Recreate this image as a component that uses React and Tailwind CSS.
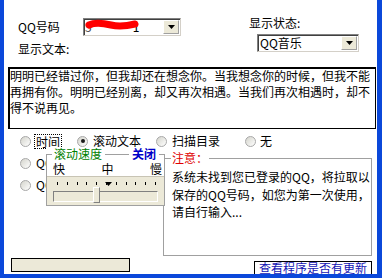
import React from "react";

function DropButton() {
  return (
    <div className="ml-auto mr-px flex h-[14px] w-[16px] shrink-0 items-center justify-center border border-t-white border-l-white border-r-[#a0a0a0] border-b-[#a0a0a0] bg-[#ece9d8]">
      <svg width="7" height="4" viewBox="0 0 7 4">
        <path d="M0 0h7L3.5 4z" fill="#000" />
      </svg>
    </div>
  );
}

function Combo({ className, children }) {
  return (
    <div
      className={`flex h-[18px] items-center border border-t-[#808080] border-l-[#808080] border-r-[#d4d0c8] border-b-[#d4d0c8] bg-white shadow-[inset_1px_1px_0_#404040] ${className}`}
    >
      {children}
      <DropButton />
    </div>
  );
}

function Radio({ checked }) {
  return (
    <span className="flex h-[11px] w-[11px] shrink-0 items-center justify-center rounded-full border border-[#a8a8a8] bg-linear-to-br from-[#d4d4cc] to-white">
      {checked && <span className="h-[4px] w-[4px] rounded-full bg-[#1a1a1a]" />}
    </span>
  );
}

export default function App() {
  return (
    <div className="h-[278px] w-[382px] bg-[#0b48da] pb-[4px] pl-[4px] pr-[5px] font-['Noto_Sans_CJK_SC',sans-serif] text-[12px] leading-[14px] text-black">
      <div className="relative flex h-full flex-col bg-white">
        {/* top fields */}
        <div className="flex h-[67px] shrink-0">
          <div className="pl-[14px] pt-[18px]">
            <div className="flex items-center">
              <span className="w-[65px]">QQ号码</span>
              <Combo className="w-[98px]">
                <div className="relative flex flex-1 items-center self-stretch pl-px">
                  <span className="text-[#505050]">5</span>
                  <span className="w-[41px]" />
                  <span>1</span>
                  <svg className="absolute left-[1px] top-0" width="54" height="12" viewBox="0 0 54 12">
                    <path
                      d="M4 6 C 10 3, 18 4, 26 6 S 42 7, 50 5"
                      stroke="#ff0000"
                      strokeWidth="7"
                      strokeLinecap="round"
                      fill="none"
                    />
                  </svg>
                </div>
              </Combo>
            </div>
            <div className="mt-[6px]">显示文本:</div>
          </div>
          <div className="ml-auto pr-[18px] pt-[16px]">
            <div>显示状态:</div>
            <Combo className="ml-[8px] mt-[4px] w-[102px]">
              <span className="pl-[2px]">QQ音乐</span>
            </Combo>
          </div>
        </div>

        {/* message text */}
        <div className="ml-[4px] h-[62px] w-[368px] shrink-0 border border-black pl-px leading-[16px] shadow-[inset_1px_1px_0_#000]">
          <div className="whitespace-nowrap">明明已经错过你，但我却还在想念你。当我想念你的时候，但我不能</div>
          <div className="whitespace-nowrap">再拥有你。明明已经别离，却又再次相遇。当我们再次相遇时，却不</div>
          <div className="whitespace-nowrap">得不说再见。</div>
        </div>

        {/* radio row */}
        <div className="mt-px flex h-[22px] shrink-0 items-center pl-[16px]">
          <div className="flex w-[57px] items-center">
            <Radio />
            <span className="ml-[3px] border border-dotted border-black px-px leading-[13px]">时间</span>
          </div>
          <div className="flex w-[79px] items-center">
            <Radio checked />
            <span className="ml-[5px]">滚动文本</span>
          </div>
          <div className="flex w-[89px] items-center">
            <Radio />
            <span className="ml-[5px]">扫描目录</span>
          </div>
          <div className="flex items-center">
            <Radio />
            <span className="ml-[4px]">无</span>
          </div>
        </div>

        <div className="-mt-px flex shrink-0">
          <div className="w-[159px] pl-[16px] pt-px">
            <div className="flex h-[22px] items-center">
              <Radio />
              <span className="ml-[5px]">QQ</span>
            </div>
            <div className="flex h-[22px] items-center">
              <Radio />
              <span className="ml-[5px]">QQ</span>
            </div>
          </div>

          {/* notice group */}
          <div className="flex h-[105px] w-[209px] flex-col">
            <div className="flex h-[14px]">
              <div className="h-[7px] w-[8px] self-end border-l border-t border-[#a0a0a0]" />
              <span className="px-px text-[#e00000]">注意：</span>
              <div className="h-[7px] flex-1 self-end border-r border-t border-[#a0a0a0]" />
            </div>
            <div className="flex-1 border-x border-b border-[#a0a0a0] pl-[8px] pt-[3px] leading-[17.5px]">
              <div className="whitespace-nowrap">系统未找到您已登录的QQ，将拉取以</div>
              <div className="whitespace-nowrap">保存的QQ号码，如您为第一次使用，</div>
              <div className="whitespace-nowrap">请自行输入...</div>
            </div>
          </div>
        </div>

        {/* bottom bar */}
        <div className="flex flex-1 items-start">
          <div className="ml-[7px] mt-[2px] h-[14px] w-[119px] border border-black bg-[#ece9d8]" />
          <div className="ml-auto mr-[5px] mt-[5px] flex h-[13px] w-[118px] items-center justify-center border-x border-t border-black text-[#1414b4]">
            查看程序是否有更新
          </div>
        </div>

        {/* speed popup */}
        <div className="absolute left-[42px] top-[147px] w-[119px] bg-white">
          <div className="flex h-[14px]">
            <div className="h-[7px] w-[6px] self-end border-l border-t border-[#a0a0a0]" />
            <span className="ml-[2px] text-[#008000]">滚动速度</span>
            <div className="mx-[3px] h-[7px] flex-1 self-end border-t border-[#a0a0a0]" />
            <span className="font-bold text-[#0000c8]">关闭</span>
            <div className="ml-[3px] h-[7px] w-[6px] self-end border-r border-t border-[#a0a0a0]" />
          </div>
          <div className="border-x border-b border-[#a0a0a0]">
            <div className="flex h-[15px] items-center justify-between pl-[6px] pr-[2px]">
              <span>快</span>
              <span>中</span>
              <span>慢</span>
            </div>
            <div className="h-[29px] border-t border-[#c8c4b4] bg-[#ece9d8] pt-[5px]">
              <div className="relative ml-[10px] mr-[8px] flex h-[4px] justify-between">
                {[0, 1, 2, 3, 4, 5, 6, 7, 8, 9, 10].map((i) => (
                  <span key={i} className="h-[3px] w-px bg-black" />
                ))}
                <svg className="absolute left-[48px] top-0" width="7" height="4" viewBox="0 0 7 4">
                  <path d="M0 0h7L3.5 4z" fill="#000" />
                </svg>
              </div>
              <div className="relative mx-[6px] mt-[5px] h-[11px] border border-t-[#808080] border-l-[#808080] border-r-white border-b-white">
                <div className="absolute left-[39px] top-[-5px] h-[16px] w-[7px] border border-t-white border-l-white border-r-[#808080] border-b-[#808080] bg-[#ece9d8]" />
              </div>
            </div>
          </div>
        </div>
      </div>
    </div>
  );
}
